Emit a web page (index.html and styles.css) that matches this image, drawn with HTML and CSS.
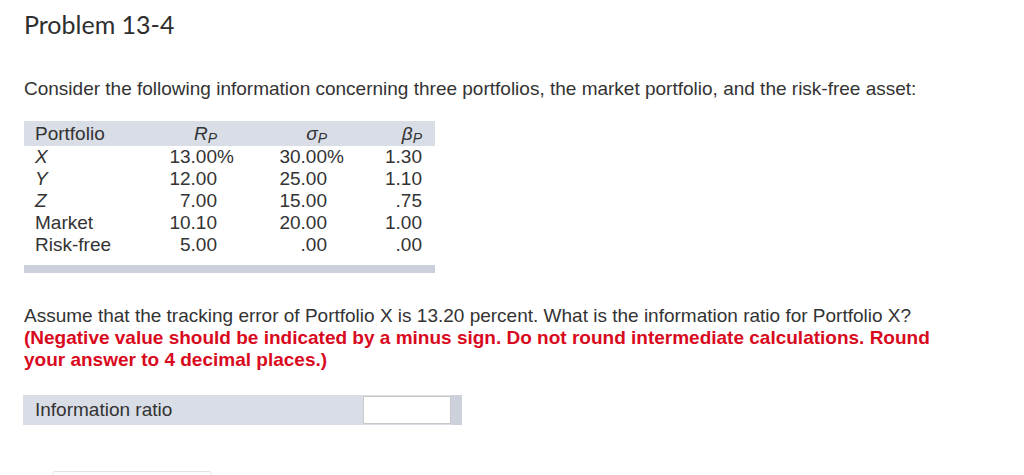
FILE: index.html
```html
<!DOCTYPE html>
<html lang="en">
<head>
<meta charset="utf-8">
<title>Problem 13-4</title>
<link rel="stylesheet" href="styles.css">
</head>
<body>
<main class="page">
  <h1 class="title">Problem 13-4</h1>
  <p class="intro">Consider the following information concerning three portfolios, the market portfolio, and the risk-free asset:</p>

  <div class="table-block">
    <table class="data">
      <colgroup>
        <col class="c-name">
        <col class="c-rp">
        <col class="c-pct">
        <col class="c-sp">
        <col class="c-pct">
        <col class="c-bp">
        <col class="c-end">
      </colgroup>
      <thead>
        <tr>
          <th class="name">Portfolio</th>
          <th class="num"><i>R</i><sub>P</sub></th>
          <th></th>
          <th class="num"><i>σ</i><sub>P</sub></th>
          <th></th>
          <th class="num"><i>β</i><sub>P</sub></th>
          <th></th>
        </tr>
      </thead>
      <tbody>
        <tr><td class="name"><i>X</i></td><td class="num">13.00</td><td class="pct">%</td><td class="num">30.00</td><td class="pct">%</td><td class="num">1.30</td><td></td></tr>
        <tr><td class="name"><i>Y</i></td><td class="num">12.00</td><td></td><td class="num">25.00</td><td></td><td class="num">1.10</td><td></td></tr>
        <tr><td class="name"><i>Z</i></td><td class="num">7.00</td><td></td><td class="num">15.00</td><td></td><td class="num">.75</td><td></td></tr>
        <tr><td class="name">Market</td><td class="num">10.10</td><td></td><td class="num">20.00</td><td></td><td class="num">1.00</td><td></td></tr>
        <tr><td class="name">Risk-free</td><td class="num">5.00</td><td></td><td class="num">.00</td><td></td><td class="num">.00</td><td></td></tr>
      </tbody>
    </table>
    <div class="table-bar"></div>
  </div>

  <p class="question">Assume that the tracking error of Portfolio X is 13.20 percent. What is the information ratio for Portfolio X? <strong class="note">(Negative value should be indicated by a minus sign. Do not round intermediate calculations. Round your answer to 4 decimal places.)</strong></p>

  <div class="answer-row">
    <span class="answer-label">Information ratio</span>
    <input class="answer-input" type="text" aria-label="Information ratio">
    <span class="answer-end"></span>
  </div>

  <div class="button-stub"></div>
</main>
</body>
</html>
```

FILE: styles.css
```css
html, body {
  margin: 0;
  padding: 0;
  background: #ffffff;
}

.page {
  padding: 0 0 0 24px;
  font-family: "Liberation Sans", Arial, Helvetica, sans-serif;
  color: #333333;
  font-size: 19px;
}

.title {
  margin: 0;
  padding-top: 10px;
  font-family: Lato, "Open Sans", sans-serif;
  font-weight: 400;
  font-size: 25px;
  line-height: 28px;
  color: #2e2e2e;
}

.intro {
  margin: 40px 0 0 0;
  line-height: 22px;
  width: 1000px;
}

.table-block {
  width: 411px;
  margin-top: 21px;
}

.data {
  width: 411px;
  border-collapse: collapse;
  table-layout: fixed;
  font-size: 19px;
}

.c-name { width: 126px; }
.c-rp { width: 67px; }
.c-pct { width: 18px; }
.c-sp { width: 92px; }
.c-bp { width: 77px; }
.c-end { width: 13px; }

.data th,
.data td {
  padding: 0;
  font-weight: 400;
  white-space: nowrap;
}

.data thead tr {
  background: #d9dde6;
  height: 25px;
}

.data tbody tr {
  height: 22px;
}

.data .name {
  text-align: left;
  padding-left: 11px;
}

.data .num {
  text-align: right;
}

.data .pct {
  text-align: left;
}

.data sub {
  font-size: 14px;
  font-style: italic;
  vertical-align: -3px;
  line-height: 0;
}

.table-bar {
  height: 8px;
  margin-top: 9px;
  background: #ccd0dc;
}

.question {
  margin: 32px 0 0 0;
  line-height: 22px;
  width: 920px;
}

.note {
  color: #d90a1e;
  font-weight: 700;
}

.answer-row {
  display: flex;
  align-items: center;
  width: 439px;
  height: 30px;
  margin: 24px 0 0 -1px;
  background: #d9dde6;
}

.answer-label {
  flex: 1;
  padding-left: 12px;
}

.answer-input {
  box-sizing: border-box;
  width: 88px;
  height: 28px;
  margin: 0;
  border: 1px solid #c9c9c9;
  background: #ffffff;
  padding: 0 4px;
  font: inherit;
}

.answer-end {
  width: 11px;
  height: 30px;
  background: #cdd1dc;
}

.button-stub {
  width: 158px;
  height: 20px;
  margin: 46px 0 0 28px;
  border: 1px solid #e3e3e3;
  border-radius: 3px;
}
```
